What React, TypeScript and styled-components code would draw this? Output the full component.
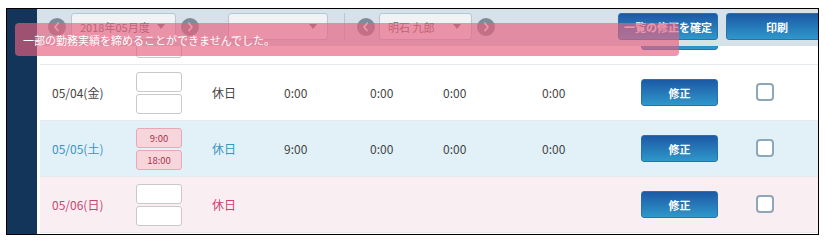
import React from "react";
import styled, { createGlobalStyle } from "styled-components";

const Global = createGlobalStyle`
  html, body { margin: 0; padding: 0; background: #ffffff; }
  body { font-family: "Noto Sans CJK JP", "Noto Sans", sans-serif; }
  * { box-sizing: border-box; }
`;

const Frame = styled.div`
  position: relative;
  margin: 8px 0 0 6px;
  width: 813px;
  height: 227px;
  border: 1px solid #000;
  display: flex;
  overflow: hidden;
  background: #fff;
`;

const Sidebar = styled.div`
  width: 30px;
  flex-shrink: 0;
  background: #14355a;
`;

const Main = styled.div`
  flex: 1;
  min-width: 0;
  display: flex;
  flex-direction: column;
  overflow: hidden;
`;

const Toolbar = styled.div`
  position: relative;
  z-index: 2;
  height: 37px;
  flex-shrink: 0;
  background: #d5e2ea;
  display: flex;
  align-items: flex-start;
  padding: 4px 0 0 11px;
  overflow: hidden;
`;

const Circle = styled.div<{ $ml?: number }>`
  width: 18px;
  height: 18px;
  margin-top: 4.5px;
  margin-left: ${(p) => p.$ml ?? 0}px;
  flex-shrink: 0;
  border-radius: 50%;
  background: #7b8d9b;
  display: flex;
  align-items: center;
  justify-content: center;
`;

const SelectBox = styled.div<{ $ml: number; $w: number }>`
  margin-left: ${(p) => p.$ml}px;
  width: ${(p) => p.$w}px;
  height: 27px;
  flex-shrink: 0;
  background: #eef3f6;
  border: 1px solid #b7c7d3;
  border-radius: 3px;
  display: flex;
  align-items: center;
  padding: 0 10px 0 8px;
  font-size: 11px;
  color: #6b6b6b;
`;

const SelectText = styled.span`
  flex: 1;
  white-space: nowrap;
`;

const Caret = styled.span`
  width: 0;
  height: 0;
  border-left: 4px solid transparent;
  border-right: 4px solid transparent;
  border-top: 5px solid #7a7a7a;
`;

const Separator = styled.div<{ $ml: number }>`
  margin-left: ${(p) => p.$ml}px;
  width: 1px;
  height: 27px;
  background: #b9c7d1;
  flex-shrink: 0;
`;

const BlueButton = styled.button<{ $ml?: number; $w: number; $h?: number }>`
  margin-left: ${(p) => p.$ml ?? 0}px;
  width: ${(p) => p.$w}px;
  height: ${(p) => p.$h ?? 27}px;
  flex-shrink: 0;
  border: 1px solid #2a6fae;
  border-radius: 3px;
  background: linear-gradient(#1c59a6, #2f98ca);
  color: #fff;
  font-family: "Noto Sans CJK JP", sans-serif;
  font-weight: 700;
  font-size: 11px;
  padding: 0;
  display: flex;
  align-items: center;
  justify-content: center;
  white-space: nowrap;
`;

const List = styled.div`
  margin-top: -37px;
  padding-left: 3px;
  display: flex;
  flex-direction: column;
`;

type Kind = "normal" | "sat" | "sun";

const Row = styled.div<{ $kind: Kind }>`
  height: 56px;
  flex-shrink: 0;
  display: grid;
  grid-template-columns: 96px 76px 72px 86px 73px 99px 99px 115px 1fr;
  align-items: center;
  border-bottom: 1px solid #e5eaee;
  background: ${(p) =>
    p.$kind === "sat" ? "#e2f1f8" : p.$kind === "sun" ? "#f9eff2" : "#ffffff"};
  font-size: 12px;
  color: #444;
`;

const DateCell = styled.div<{ $kind: Kind }>`
  padding-left: 12px;
  color: ${(p) =>
    p.$kind === "sat" ? "#3a95bf" : p.$kind === "sun" ? "#c94571" : "#444"};
`;

const Kubun = styled.div<{ $kind: Kind }>`
  color: ${(p) =>
    p.$kind === "sat" ? "#3a95bf" : p.$kind === "sun" ? "#c94571" : "#444"};
`;

const InputStack = styled.div`
  display: flex;
  flex-direction: column;
  gap: 2px;
`;

const TimeInput = styled.div<{ $filled?: boolean }>`
  width: 46px;
  height: 20px;
  border-radius: 3px;
  border: 1px solid ${(p) => (p.$filled ? "#e6a9b5" : "#c9c9c9")};
  background: ${(p) => (p.$filled ? "#f6d5db" : "#ffffff")};
  color: #a8334f;
  font-size: 9.5px;
  display: flex;
  align-items: center;
  justify-content: center;
`;

const Cell = styled.div``;

const Check = styled.div`
  width: 18px;
  height: 18px;
  margin-top: -2px;
  border: 2px solid #8ea7ba;
  border-radius: 4px;
  background: #fff;
`;

const Toast = styled.div`
  position: absolute;
  z-index: 5;
  left: 8px;
  top: 14px;
  width: 664px;
  height: 33px;
  border-radius: 4px;
  background: rgba(232, 96, 126, 0.66);
  color: #fff;
  font-size: 11px;
  display: flex;
  align-items: center;
  padding-left: 8px;
`;

const Chevron = ({ dir }: { dir: "l" | "r" }) => (
  <svg width="10" height="10" viewBox="0 0 10 10">
    <path
      d={dir === "l" ? "M6 1.5 L3 5 L6 8.5" : "M4 1.5 L7 5 L4 8.5"}
      fill="none"
      stroke="#fff"
      strokeWidth="1.8"
      strokeLinecap="round"
      strokeLinejoin="round"
    />
  </svg>
);

type RowData = {
  kind: Kind;
  date: string;
  start?: string;
  end?: string;
  kubun: string;
  times: string[];
};

const rows: RowData[] = [
  { kind: "normal", date: "05/03(木)", kubun: "休日", times: ["0:00", "0:00", "0:00", "0:00"] },
  { kind: "normal", date: "05/04(金)", kubun: "休日", times: ["0:00", "0:00", "0:00", "0:00"] },
  { kind: "sat", date: "05/05(土)", start: "9:00", end: "18:00", kubun: "休日", times: ["9:00", "0:00", "0:00", "0:00"] },
  { kind: "sun", date: "05/06(日)", kubun: "休日", times: ["", "", "", ""] },
];

export default function App() {
  return (
    <>
      <Global />
      <Frame>
        <Sidebar />
        <Main>
          <Toolbar>
            <Circle>
              <Chevron dir="l" />
            </Circle>
            <SelectBox $ml={5} $w={105}>
              <SelectText>2018年05月度</SelectText>
              <Caret />
            </SelectBox>
            <Circle $ml={5}>
              <Chevron dir="r" />
            </Circle>
            <SelectBox $ml={29} $w={100}>
              <SelectText />
              <Caret />
            </SelectBox>
            <Separator $ml={16} />
            <Circle $ml={12}>
              <Chevron dir="l" />
            </Circle>
            <SelectBox $ml={4} $w={93}>
              <SelectText>明石 九郎</SelectText>
              <Caret />
            </SelectBox>
            <Circle $ml={5}>
              <Chevron dir="r" />
            </Circle>
            <BlueButton $ml={123} $w={100}>一覧の修正を確定</BlueButton>
            <BlueButton $ml={8} $w={102}>印刷</BlueButton>
          </Toolbar>
          <List>
            {rows.map((r) => (
              <Row key={r.date} $kind={r.kind}>
                <DateCell $kind={r.kind}>{r.date}</DateCell>
                <InputStack>
                  <TimeInput $filled={!!r.start}>{r.start}</TimeInput>
                  <TimeInput $filled={!!r.end}>{r.end}</TimeInput>
                </InputStack>
                <Kubun $kind={r.kind}>{r.kubun}</Kubun>
                {r.times.map((t, i) => (
                  <Cell key={i}>{t}</Cell>
                ))}
                <BlueButton $w={77}>修正</BlueButton>
                <Check />
              </Row>
            ))}
          </List>
        </Main>
        <Toast>一部の勤務実績を締めることができませんでした。</Toast>
      </Frame>
    </>
  );
}
